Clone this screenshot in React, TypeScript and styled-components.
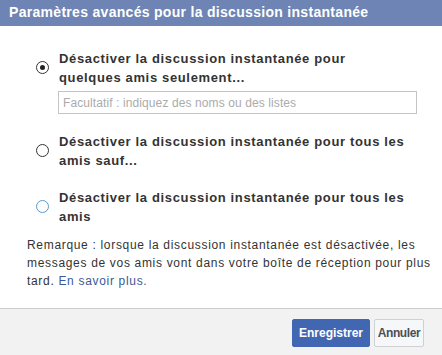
import { createGlobalStyle } from "styled-components";
import styled from "styled-components";

const GlobalStyle = createGlobalStyle`
  html, body {
    margin: 0;
    padding: 0;
    background: #ffffff;
  }
  body {
    font-family: "Liberation Sans", Arial, sans-serif;
    color: #333333;
  }
`;

type Choice = {
  id: string;
  label: string;
  checked?: boolean;
  focused?: boolean;
  withInput?: boolean;
};

const CHOICES: Choice[] = [
  {
    id: "some",
    label: "Désactiver la discussion instantanée pour quelques amis seulement...",
    checked: true,
    withInput: true,
  },
  {
    id: "except",
    label: "Désactiver la discussion instantanée pour tous les amis sauf...",
  },
  {
    id: "all",
    label: "Désactiver la discussion instantanée pour tous les amis",
    focused: true,
  },
];

export default function App() {
  return (
    <>
      <GlobalStyle />
      <Dialog>
        <Header>Paramètres avancés pour la discussion instantanée</Header>

        <Body>
          <ChoiceList>
            {CHOICES.map((choice) => (
              <ChoiceRow key={choice.id}>
                <Radio $checked={choice.checked} $focused={choice.focused} />
                <ChoiceContent>
                  <ChoiceLabel>{choice.label}</ChoiceLabel>
                  {choice.withInput && (
                    <TextField placeholder="Facultatif : indiquez des noms ou des listes" />
                  )}
                </ChoiceContent>
              </ChoiceRow>
            ))}
          </ChoiceList>

          <Note>
            Remarque : lorsque la discussion instantanée est désactivée, les
            messages de vos amis vont dans votre boîte de réception pour plus
            tard. <NoteLink href="#">En savoir plus.</NoteLink>
          </Note>
        </Body>

        <Footer>
          <Button $primary $width={78}>
            Enregistrer
          </Button>
          <Button $width={50}>Annuler</Button>
        </Footer>
      </Dialog>
    </>
  );
}

/**
 * Styles
 */

const Dialog = styled.div`
  width: 442px;
  height: 355px;
  display: flex;
  flex-direction: column;
  background: #ffffff;
  overflow: hidden;
`;

const Header = styled.div`
  height: 26px;
  flex: none;
  box-sizing: border-box;
  padding: 4px 0 0 9px;
  background: #6d84b4;
  color: #ffffff;
  font-size: 14px;
  font-weight: bold;
  line-height: 17px;
  letter-spacing: 0.3px;
  white-space: nowrap;
`;

const Body = styled.div`
  flex: 1;
  display: flex;
  flex-direction: column;
  padding: 23px 0 0 27px;
`;

const ChoiceList = styled.div`
  display: flex;
  flex-direction: column;
  gap: 18px;
  padding-left: 9px;
`;

const ChoiceRow = styled.label`
  display: flex;
  align-items: flex-start;
`;

const Radio = styled.span<{ $checked?: boolean; $focused?: boolean }>`
  flex: none;
  width: 13px;
  height: 13px;
  box-sizing: border-box;
  margin-top: 12px;
  margin-right: 10px;
  border-radius: 50%;
  border: 1px solid ${(p) => (p.$focused ? "#5b9bd1" : "#333333")};
  background: #ffffff;
  display: flex;
  align-items: center;
  justify-content: center;

  &::after {
    content: "";
    display: ${(p) => (p.$checked ? "block" : "none")};
    width: 5px;
    height: 5px;
    border-radius: 50%;
    background: #222222;
  }
`;

const ChoiceContent = styled.div`
  display: flex;
  flex-direction: column;
`;

const ChoiceLabel = styled.div`
  width: 350px;
  font-size: 13px;
  font-weight: bold;
  line-height: 19px;
  letter-spacing: 0.65px;
  color: #333333;
`;

const TextField = styled.input`
  margin: 4px 0 0 -1px;
  width: 359px;
  height: 23px;
  box-sizing: border-box;
  border: 1px solid #c4c4c4;
  padding: 0 4px;
  font-family: "Liberation Sans", Arial, sans-serif;
  font-size: 12px;
  letter-spacing: 0.1px;
  color: #333333;
  outline: none;

  &::placeholder {
    color: #ababab;
  }
`;

const Note = styled.p`
  width: 410px;
  margin: 10px 0 0;
  font-size: 12px;
  line-height: 18px;
  letter-spacing: 0.68px;
  color: #333333;
`;

const NoteLink = styled.a`
  color: #3b5998;
  text-decoration: none;
`;

const Footer = styled.div`
  height: 47px;
  flex: none;
  box-sizing: border-box;
  border-top: 1px solid #cccccc;
  background: #f2f2f2;
  display: flex;
  justify-content: flex-end;
  align-items: flex-start;
  gap: 4px;
  padding: 10px 18px 0 0;
`;

const Button = styled.button<{ $primary?: boolean; $width: number }>`
  width: ${(p) => p.$width}px;
  height: 28px;
  box-sizing: border-box;
  padding: 0;
  border: 1px solid ${(p) => (p.$primary ? "#4267b2" : "#ced0d4")};
  border-radius: 2px;
  background: ${(p) => (p.$primary ? "#4267b2" : "#f6f7f9")};
  color: ${(p) => (p.$primary ? "#ffffff" : "#4b4f56")};
  font-family: "Liberation Sans", Arial, sans-serif;
  font-size: 12px;
  font-weight: bold;
  letter-spacing: ${(p) => (p.$primary ? "0" : "-0.4px")};
  white-space: nowrap;
  cursor: pointer;
`;
